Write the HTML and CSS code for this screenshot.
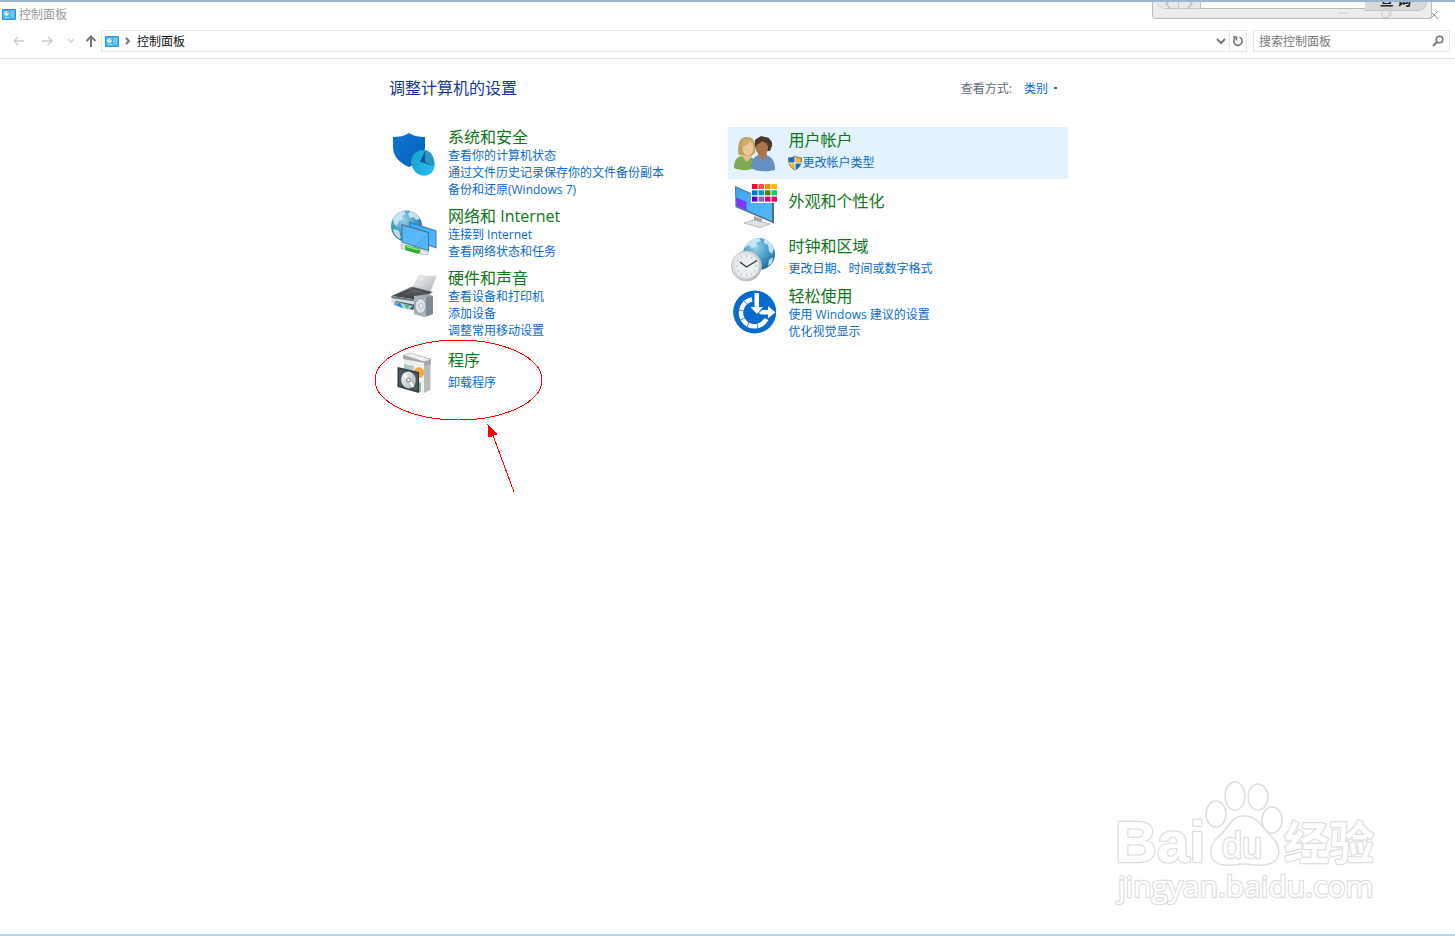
FILE: index.html
```html
<!DOCTYPE html>
<html lang="zh-CN">
<head>
<meta charset="utf-8">
<title>控制面板</title>
<link rel="stylesheet" href="styles.css">
</head>
<body>
<svg class="defs" width="0" height="0" aria-hidden="true">
  <defs>
    <linearGradient id="sky" x1="0" y1="0" x2="1" y2="1"><stop offset="0" stop-color="#39a7f4"/><stop offset="1" stop-color="#58b8fb"/></linearGradient>
    <radialGradient id="globe" cx=".4" cy=".3" r=".75"><stop offset="0" stop-color="#9bd0ea"/><stop offset=".55" stop-color="#4398c5"/><stop offset="1" stop-color="#22668f"/></radialGradient>
    <linearGradient id="shield" x1="0" y1="0" x2="1" y2="1"><stop offset="0" stop-color="#1275d2"/><stop offset="1" stop-color="#0061b8"/></linearGradient>
    <linearGradient id="pie" x1="0" y1="0" x2="1" y2="1"><stop offset="0" stop-color="#159ccb"/><stop offset="1" stop-color="#2cc4f5"/></linearGradient>
    <linearGradient id="silver" x1="0" y1="0" x2="1" y2="1"><stop offset="0" stop-color="#f8f8f8"/><stop offset="1" stop-color="#aab0b5"/></linearGradient>
    <linearGradient id="dark" x1="0" y1="0" x2="0" y2="1"><stop offset="0" stop-color="#777b80"/><stop offset="1" stop-color="#303438"/></linearGradient>
    <symbol id="panel" viewBox="0 0 14 11">
      <rect width="14" height="11" rx="1" fill="#2f91cf"/><rect x="1" y="1" width="12" height="9" fill="#47b7f5"/>
      <circle cx="4.5" cy="4.6" r="2.3" fill="#d9f1ff"/><path d="M4.5 4.6V2.3a2.3 2.3 0 0 1 2.3 2.3z" fill="#f4a93b"/>
      <path d="M8.5 3h3.5M8.5 5h3.5M8.5 7h3.5M3 8.5h4" stroke="#c7ebff" stroke-width=".7"/>
    </symbol>
  </defs>
</svg>

<div class="window">
  <header class="titlebar">
    <svg class="panel-icon" aria-hidden="true"><use href="#panel"/></svg>
    <span>控制面板</span>
    <button class="close" aria-label="关闭"><svg width="10" height="10" viewBox="0 0 10 10"><path d="M1 1l8 8M9 1L1 9"/></svg></button>
  </header>

  <nav class="toolbar" aria-label="导航">
    <div class="history">
      <button class="faint" aria-label="后退"><svg width="12" height="10" viewBox="0 0 12 10"><path d="M11 5H1.500M5 1L1 5l4 4"/></svg></button>
      <button class="faint" aria-label="前进"><svg width="12" height="10" viewBox="0 0 12 10"><path d="M1 5h9.500M7 1l4 4-4 4"/></svg></button>
      <button class="faint narrow" aria-label="最近位置"><svg width="8" height="6" viewBox="0 0 8 6"><path d="M1 1l3 3 3-3"/></svg></button>
      <button class="narrow" aria-label="上移"><svg width="12" height="12" viewBox="0 0 12 12"><path class="thick" d="M6 12V2M1.500 6L6 1.500 10.500 6"/></svg></button>
    </div>
    <div class="address">
      <svg class="panel-icon" aria-hidden="true"><use href="#panel"/></svg>
      <svg class="crumb" width="6" height="8" viewBox="0 0 6 8" aria-hidden="true"><path class="thick" d="M1 1l3 3-3 3"/></svg>
      <a href="#home">控制面板</a>
      <button class="drop" aria-label="地址历史"><svg width="10" height="7" viewBox="0 0 10 7"><path class="thick" d="M1 1l4 4 4-4"/></svg></button>
      <button class="refresh" aria-label="刷新"><svg width="12" height="12" viewBox="0 0 12 12"><path class="mid" d="M7.500 2.300A4.200 4.200 0 1 1 3.200 3M1 2h3.500v3.500"/></svg></button>
    </div>
    <label class="search">
      <input type="text" placeholder="搜索控制面板" aria-label="搜索控制面板">
      <svg width="12" height="12" viewBox="0 0 12 12" aria-hidden="true"><circle class="mid" cx="7.500" cy="4.500" r="3.300"/><path class="thick" d="M5 7L1 11"/></svg>
    </label>
  </nav>

  <main class="content">
    <div class="heading">
      <h1>调整计算机的设置</h1>
      <div class="view"><label for="view">查看方式:</label><span class="pick"><select id="view"><option>类别</option></select><i></i></span></div>
    </div>

    <div class="columns">
      <div class="column">
        <section class="item">
          <svg class="icon" viewBox="0 0 48 48" aria-hidden="true">
            <path d="M3 7c6 0 11-1 16-4 5 3 10 4 16 4v10c0 10-7 16-16 20C10 33 3 27 3 17z" fill="url(#shield)"/>
            <ellipse cx="33" cy="33" rx="11.500" ry="13" transform="rotate(-25 33 33)" fill="url(#pie)"/>
            <path d="M33 33l2-13c6 1 10 7 9 16z" fill="#2798bb"/><path d="M30 31.500L35 21v11l7 3.500z" fill="#07579c"/>
          </svg>
          <div class="text"><h2><a href="#system">系统和安全</a></h2>
            <a href="#status">查看你的计算机状态</a><a href="#history">通过文件历史记录保存你的文件备份副本</a><a href="#backup">备份和还原(Windows 7)</a></div>
        </section>
        <section class="item">
          <svg class="icon" viewBox="0 0 48 48" aria-hidden="true">
            <circle cx="16.500" cy="17" r="15.500" fill="url(#globe)"/>
            <path d="M3 10c2-4 6-7 11-8l2 3-4 2 1 3-4 2-2 5-3-2zM20 2c5 1 8 4 10 8l-4 1-2-3-4 1-2-4zM4 20l5 2 2 7-1 1c-4-2-6-6-7-9z" fill="#d8edf4" opacity=".85"/>
            <path d="M19 12.500l27.500 9v18L19 30z" fill="#3d7fa8"/><path d="M20 14l25.500 8.300v15.700L20 29z" fill="url(#sky)"/>
            <path d="M22 35l3 7 5 2 2-7z" fill="#d8dedf"/>
            <path d="M11.500 15l27.500 8v19.500l-27.500-9z" fill="#3d7795"/><path d="M12.500 16.500l25.500 7.400V41l-25.500-8z" fill="url(#sky)"/>
            <path d="M12.500 16.500l25.500 7.400-14 12.100-11.500-3z" fill="#83cfff" opacity=".3"/>
            <path d="M11 35l5 1v5l-5-1.500zM30 40l8 2v4l-8-1z" fill="#e0e4e2" stroke="#a8afae" stroke-width=".5"/>
            <path d="M16 36l13 3.500q2 2.500 0 5.500L16 41.500q-2-3 0-5.500z" fill="#35ad38"/><path d="M16.500 37.500l12 3.200" stroke="#89e37e" stroke-width="1.500"/>
          </svg>
          <div class="text"><h2><a href="#network">网络和 Internet</a></h2><a href="#connect">连接到 Internet</a><a href="#tasks">查看网络状态和任务</a></div>
        </section>
        <section class="item">
          <svg class="icon" viewBox="0 0 48 48" aria-hidden="true">
            <path d="M22 18L29 4.500q8 2 17 .5l-6 16z" fill="url(#silver)" stroke="#c1c4c7" stroke-width=".7"/>
            <path d="M1.500 25L22 15.500l21 5.500-14 8z" fill="url(#dark)"/><path d="M9 24l14-6.500 16 4" stroke="#3b3f42" fill="none"/>
            <path d="M1.500 25L29 29v11L1.500 32z" fill="#d9dcde"/><path d="M1.500 25L29 29v2L1.500 27z" fill="#6b7176"/>
            <path d="M6 30l20 4-3 5-19-5z" fill="#4c565d"/><path d="M7 31l16 4-5 4-14-5z" fill="#9bd6f3"/><path d="M5 33l5-1 3 5-3-1z" fill="#268bd1"/><path d="M14 33l6 2-3 3z" fill="#69b35e"/>
            <path d="M24 25l15-2 4 2v18l-9 3-10-3z" fill="#9da8b0"/><path d="M24 25l12 1v19.500L24 43z" fill="#a9b4bd"/><path d="M36 26l7-1v18l-7 2.500z" fill="#7d8890"/>
            <ellipse cx="30.500" cy="35" rx="5.500" ry="7.500" fill="#dbe0e4" stroke="#8a959e"/><ellipse cx="31" cy="35" rx="2" ry="2.500" fill="#f5f6f6" stroke="#aab3ba"/>
          </svg>
          <div class="text"><h2><a href="#hardware">硬件和声音</a></h2><a href="#devices">查看设备和打印机</a><a href="#add">添加设备</a><a href="#mobility">调整常用移动设置</a></div>
        </section>
        <section class="item single marked">
          <svg class="icon" viewBox="0 0 48 48" aria-hidden="true">
            <path d="M14 9l20 5v29l-20-4z" fill="#edf0ef"/><path d="M34 14l6.500-2v28L34 43z" fill="#b9bbbb"/>
            <path d="M14 14l10 2-3 16-7-2z" fill="#aacbb9"/><path d="M24 30l7 3v9h-7z" fill="#8dbb94"/>
            <circle cx="29" cy="22.500" r="5.300" fill="#f4a747"/><path d="M13 5l7-2.500L41 9v5l-6 2-1-3L13 9z" fill="#a4a6a7"/><path d="M14 5l6-2 20 6.500-6 2z" fill="#eee"/>
            <path d="M7.500 17L29 22v21L7.500 37z" fill="#303b43"/><path d="M9 19l18.500 4.500v17.500L9 36z" fill="#4e5a61"/>
            <ellipse cx="18.500" cy="30" rx="7.300" ry="8.500" fill="url(#silver)" transform="rotate(-10 18.500 30)"/><path d="M18.500 30l-5-6M18.500 30l5 7" stroke="#fff" stroke-width="2"/><circle cx="18.500" cy="30" r="2.600" fill="#8da0a8"/><circle cx="18.500" cy="30" r="1.200" fill="#fff"/>
          </svg>
          <div class="text"><h2><a href="#programs">程序</a></h2><a href="#uninstall">卸载程序</a></div>
          <svg class="annotation" width="170" height="156" viewBox="0 0 170 156" aria-hidden="true">
            <ellipse cx="84.500" cy="41" rx="83.500" ry="40"/><path d="M140 153L117 91"/><path class="head" d="M114 86l9 9-8 3z"/>
          </svg>
        </section>
      </div>

      <div class="column right">
        <section class="item single selected">
          <svg class="icon" viewBox="0 0 48 48" aria-hidden="true">
            <path d="M3 38c0-7 2-11 8-12l8 1c5 1 7 6 7 10-8 4-16 4-23 1z" fill="#82aa51"/><path d="M11 26l5 6 5-6-3-4h-5z" fill="#e9c094"/>
            <path d="M7 24c0-8 0-17 9-17 7 0 10 6 8 16l-4 3-12-1z" fill="#bca365"/><ellipse cx="17" cy="18" rx="5.500" ry="7.500" fill="#edc598"/><path d="M11 17c4-1 7-3 8-7 1 3 2 4 4 5l-1-5-6-2-5 3z" fill="#c9af6d"/>
            <path d="M20 38c0-7 3-12 8-13h7c6 2 9 6 9 15-8 2-18 2-24-2z" fill="#658fbe"/><path d="M27 25l5 6 4-6-1-4h-6z" fill="#ad7950"/>
            <path d="M24 16c-1-5 2-9 7-9 7 0 11 4 10 9l-2 5H26z" fill="#49382c"/><ellipse cx="31" cy="18" rx="6" ry="7.500" fill="#a7744e"/><path d="M24 15q5-1 7-4 4 3 9 3l-2-6-8-2-6 4z" fill="#4c382b"/>
          </svg>
          <div class="text"><h2><a href="#users">用户帐户</a></h2>
            <a class="guarded" href="#type"><svg width="16" height="16" viewBox="0 0 16 16" aria-hidden="true"><path d="M8 .500C6 2 4 2.500 1 2.500 1 9 3 13 8 15.500c5-2.500 7-6.500 7-13C12 2.500 10 2 8 .500z" fill="#5d6a75"/><path d="M7.500 1.800C6 3 4 3.500 2 3.500L2.300 7.500h5.200zM8.500 8.500v6c3-1.500 4.800-3.500 5.300-6z" fill="#176db8"/><path d="M8.500 1.800C10 3 12 3.500 14 3.500l-.300 4H8.500zM7.500 8.500v6C4.500 13 3 11 2.300 8.500z" fill="#f8b51e"/><path d="M8 1.500v13.500M2 8h12" stroke="#fff"/></svg>更改帐户类型</a></div>
        </section>
        <section class="item title-only">
          <svg class="icon" viewBox="0 0 48 48" aria-hidden="true">
            <path d="M23 33l8 3v6l-8-2z" fill="#9fa9ad"/><path d="M13 40l10-3 16 4-10 3.500z" fill="#dfe3e6" stroke="#9aa5ab" stroke-width=".7"/>
            <path d="M4 3l39 17v20.500L4.500 24z" fill="#4c6f80"/><path d="M5 4.500L41 20.500V38L5.500 23z" fill="url(#sky)"/><path d="M5 14.500l10.500 4.500v8L5.500 23z" fill="#7f35f5"/>
            <path d="M20 0h26.500v20H20z" fill="#fff"/>
            <g><path fill="#e81123" d="M21 1h5.500v5H21z"/><path fill="#ff4e50" d="M27.500 1H33v5h-5.500z"/><path fill="#ff8c00" d="M34 1h5.500v5H34z"/><path fill="#ffb900" d="M40.500 1H46v5h-5.500z"/><path fill="#0078d7" d="M21 7.300h5.500v5H21z"/><path fill="#0099bc" d="M27.500 7.300H33v5h-5.500z"/><path fill="#498205" d="M34 7.300h5.500v5H34z"/><path fill="#00cc6a" d="M40.500 7.300H46v5h-5.500z"/><path fill="#5b00cb" d="M21 13.600h5.500v5H21z"/><path fill="#8764b8" d="M27.500 13.600H33v5h-5.500z"/><path fill="#e3008c" d="M34 13.600h5.500v5H34z"/><path fill="#ea005e" d="M40.500 13.600H46v5h-5.500z"/></g>
          </svg>
          <div class="text"><h2><a href="#appearance">外观和个性化</a></h2></div>
        </section>
        <section class="item single">
          <svg class="icon" viewBox="0 0 48 48" aria-hidden="true">
            <circle cx="28" cy="18" r="16" fill="url(#globe)"/><path d="M15 8c4-4 8-6 13-6l2 3-5 2 1 3-5 2-3-3-4 3zM33 3c4 1 8 4 10 9l-2 6-3-3-1-6-4-2zM38 24l4-3-1 6-4 3z" fill="#d2ebf5" opacity=".9"/>
            <circle cx="15.500" cy="30" r="15" fill="url(#silver)" stroke="#b9bec2"/><circle cx="15.500" cy="30" r="12.500" fill="#e9eef2" stroke="#d5dade"/>
            <path d="M15.500 19v2.500M15.500 38.500V41M4.500 30H7M24 30h2.500M10 20.500l1 2M21 20.500l-1 2M6 24.500l2 1M25 24.500l-2 1M6 35.500l2-1M25 35.500l-2-1M10 39.500l1-2M21 39.500l-1-2" stroke="#b3bac0"/><path d="M9 26l6.500 5L26 24.500" fill="none" stroke="#30383d" stroke-width="1.300"/>
          </svg>
          <div class="text"><h2><a href="#clock">时钟和区域</a></h2><a href="#formats">更改日期、时间或数字格式</a></div>
        </section>
        <section class="item">
          <svg class="icon" viewBox="0 0 48 48" aria-hidden="true">
            <circle cx="23.700" cy="23" r="21.500" fill="#086acb"/><path d="M21 10.500A13.500 13.500 0 1 0 35.500 30" fill="none" stroke="#fff" stroke-width="4.500"/>
            <path d="M13 12l4 4M7.500 21l5 1M9 31l5-2M16 38l2-5M27 40l-1-5" stroke="#086acb" stroke-width=".8"/>
            <path d="M23.500 4h4.500v14h4L25.800 25 19.500 18h4z" fill="#fff"/><path d="M27 23.500l4-2.500h6v-4l7.500 6.200-7.500 6.300v-4h-7z" fill="#fff"/><path d="M27 24.500l5-5" stroke="#086acb" stroke-width=".8"/>
          </svg>
          <div class="text"><h2><a href="#ease">轻松使用</a></h2><a href="#suggest">使用 Windows 建议的设置</a><a href="#visual">优化视觉显示</a></div>
        </section>
      </div>
    </div>
  </main>

  <div class="floating">
    <button class="round" aria-label="上一个"><svg width="8" height="10" viewBox="0 0 8 10"><path d="M6 0L2 4l4 4"/></svg></button>
    <button aria-label="下一个"><svg width="8" height="10" viewBox="0 0 8 10"><path d="M2 0l4 4-4 4"/></svg></button>
    <input type="text" aria-label="查询内容">
    <button class="query">查 询</button>
    <svg class="ghosts" width="56" height="12" viewBox="0 0 56 12" aria-hidden="true"><path d="M1 6h9M45 3.500h7v7h-7zM47 3V1.500h7v7h-2"/></svg>
  </div>

  <svg class="watermark" width="270" height="132" viewBox="0 0 270 132" role="img" aria-label="百度经验">
    <g class="paw"><ellipse cx="105" cy="38" rx="10" ry="13"/><ellipse cx="124" cy="20" rx="10" ry="14"/><ellipse cx="147" cy="21" rx="10" ry="13"/><ellipse cx="161" cy="44" rx="10" ry="13"/><path d="M133 40c-13 0-15 12-25 20-14 12-9 28 5 29 8 1 12-1 20-1s12 2 21 1c15-2 19-16 6-29-9-9-13-20-27-20z"/></g>
    <text class="brand" x="4" y="86">Bai</text><text class="du" x="111" y="82">du</text><text class="cjk" x="173" y="84">经验</text>
    <text class="site" x="7" y="121">jingyan.baidu.com</text>
  </svg>
</div>
</body>
</html>
```

FILE: styles.css
```css
* { box-sizing: border-box; }

body {
  margin: 0;
  background: #fff;
  color: #222;
  font: 12px/17px "Open Sans", "Noto Sans CJK SC", sans-serif;
}

button, input, select { font: inherit; color: inherit; border: 0; padding: 0; background: none; }
a { color: #0a6acf; text-decoration: none; }
h1, h2 { margin: 0; font-size: 16px; line-height: 20px; font-weight: 400; }
.defs { position: absolute; }

.window {
  position: relative;
  display: flex;
  flex-direction: column;
  min-height: 100vh;
  overflow: hidden;
  border-top: 2px solid #9ab6d3;
  border-bottom: 2px solid #bcd4e8;
}

.titlebar {
  display: flex;
  align-items: center;
  gap: 3px;
  height: 25px;
  padding: 0 16px 0 2px;
  color: #999;
}
.panel-icon { flex: none; width: 14px; height: 11px; }
.close { margin-left: auto; height: 10px; line-height: 0; }

.toolbar {
  display: flex;
  gap: 6px;
  height: 32px;
  padding: 3px 5px 6px 0;
  border-bottom: 1px solid #e4e4e4;
}
.toolbar svg, .close svg, .floating svg { fill: none; stroke: #777; stroke-width: 1.3; }
.toolbar .thick { stroke-width: 2; }
.toolbar .mid { stroke-width: 1.6; }
.history { display: flex; align-items: center; padding-left: 5px; margin-right: -6px; }
.history button { width: 28px; line-height: 0; }
.history .narrow { width: 20px; }
.history .faint svg { stroke: #ccc; }
.close svg { stroke: #999; stroke-width: 1; }

.address, .search { display: flex; align-items: center; border: 1px solid #e6e6e6; }
.address { flex: 1; padding-left: 3px; }
.address .panel-icon { stroke: none; }
.address .crumb { margin: 0 6px; }
.address a { color: #111; }
.drop { margin-left: auto; width: 16px; line-height: 0; }
.refresh { align-self: stretch; width: 17px; line-height: 0; border-left: 1px solid #e6e6e6; }
.search { width: 197px; padding: 0 5px; }
.search input { flex: 1; min-width: 0; outline: 0; }
.search input::placeholder { color: #777; opacity: 1; }

.content { width: 100%; max-width: 681px; margin: 0 auto; padding-top: 19px; }
.heading { display: flex; justify-content: space-between; padding: 0 11px 0 2px; }
h1 { color: #1038a0; }
.view { display: flex; align-items: center; gap: 12px; color: #5e6a7d; }
.pick { display: flex; align-items: center; gap: 5px; color: #0a6acf; }
.pick select { appearance: none; }
.pick i { width: 3px; height: 2px; background: #0a6acf; }

.columns { display: grid; grid-template-columns: 1fr 1fr; margin-top: 29px; }
.column { display: flex; flex-direction: column; }
.right { gap: 1px; }

.item { position: relative; display: flex; gap: 10px; min-height: 52px; padding: 0 0 8px 3px; }
.icon { flex: none; width: 48px; height: 48px; margin-top: 3px; }
.text { display: flex; flex-direction: column; align-items: flex-start; white-space: nowrap; }
.item h2 a { color: #10781a; }
.right .item { padding-bottom: 0; }
.single .text { padding-top: 3px; gap: 4px; }
.title-only .text { padding-top: 11px; }
.selected { background: #e4f2fe; }
.guarded { display: flex; align-items: center; margin-left: -2px; height: 17px; }

.annotation { position: absolute; left: -13px; top: -8px; fill: none; stroke: #f00; shape-rendering: crispEdges; pointer-events: none; }
.annotation .head { fill: #f00; }

.floating {
  position: absolute;
  top: -2px;
  right: 23px;
  display: flex;
  width: 280px;
  height: 19px;
  padding: 0 4px 9px;
  border: 1px solid #bbb;
  border-top: 0;
  border-radius: 0 0 4px 4px;
  background: #ececec;
}
.floating svg { stroke: #bbb; }
.floating button { width: 22px; line-height: 0; border: 1px solid #c4c4c4; border-width: 0 1px 1px 0; background: #e8e8e8; }
.floating .round { border-bottom-left-radius: 9px; }
.floating input { flex: 1; min-width: 0; background: #fff; border-bottom: 1px solid #bbb; }
.floating .query { width: 62px; padding-bottom: 10px; overflow: hidden; font-size: 14px; font-weight: 700; color: #222; background: #d9d9d9; border-bottom-right-radius: 9px; }
.floating .ghosts { position: absolute; right: 38px; top: 7px; stroke: #ccc; stroke-width: 1; }

.watermark { position: absolute; right: 74px; bottom: 26px; fill: #fff; stroke: #dedede; stroke-width: 1.5; pointer-events: none; }
.watermark text { paint-order: stroke; stroke-width: 2.5; stroke-linejoin: round; }
.watermark .brand { font: 700 58px "Liberation Sans", sans-serif; }
.watermark .du { font: 400 36px "Liberation Sans", sans-serif; }
.watermark .cjk { font: 700 45px "Noto Sans CJK SC", sans-serif; }
.watermark .site { font: 400 30px "Open Sans", sans-serif; }
```
